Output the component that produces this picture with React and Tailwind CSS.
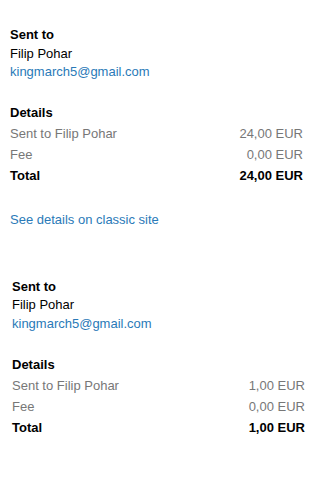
const transfers = [
  { name: "Filip Pohar", email: "kingmarch5@gmail.com", amount: "24,00 EUR", fee: "0,00 EUR", total: "24,00 EUR", classic: true, pad: "pl-[10px] pr-[13px]", gap: "mt-[20px]" },
  { name: "Filip Pohar", email: "kingmarch5@gmail.com", amount: "1,00 EUR", fee: "0,00 EUR", total: "1,00 EUR", classic: false, pad: "pl-[12px] pr-[11px] mt-[48px]", gap: "mt-[21px]" },
];

// one receipt block
const Receipt = ({ t }) => (
  <section className={t.pad}>
    <div className="leading-[18.5px]">
      <div className="font-bold text-black">Sent to</div>
      <div className="text-black">{t.name}</div>
      <a className="text-[#2a7ab8]">{t.email}</a>
    </div>

    <div className={`${t.gap} leading-[21px]`}>
      <div className="font-bold text-black">Details</div>
      <div className="flex justify-between text-[#777]">
        <span>Sent to {t.name}</span>
        <span>{t.amount}</span>
      </div>
      <div className="flex justify-between text-[#777]">
        <span>Fee</span>
        <span>{t.fee}</span>
      </div>
      <div className="flex justify-between font-bold text-black">
        <span>Total</span>
        <span>{t.total}</span>
      </div>
    </div>

    {t.classic && (
      <div className="mt-[23px] leading-[21px]">
        <a className="text-[#2a7ab8]">See details on classic site</a>
      </div>
    )}
  </section>
);

export default function App() {
  return (
    <div className="w-[316px] h-[488px] bg-white pt-[26px] text-[13px] font-['Liberation_Sans',Arial,sans-serif]">
      {transfers.map((t, i) => (
        <Receipt key={i} t={t} />
      ))}
    </div>
  );
}
